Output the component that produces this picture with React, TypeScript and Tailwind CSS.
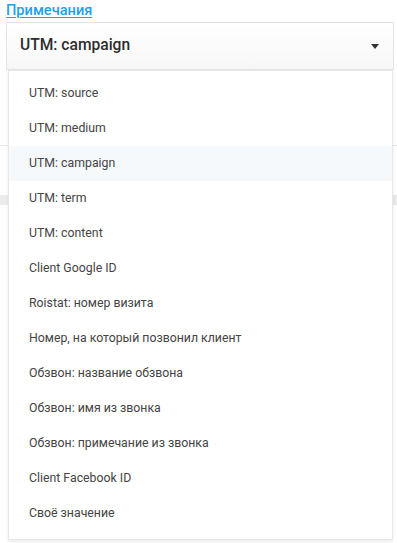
import React from "react";

const items = [
  "UTM: source",
  "UTM: medium",
  "UTM: campaign",
  "UTM: term",
  "UTM: content",
  "Client Google ID",
  "Roistat: номер визита",
  "Номер, на который позвонил клиент",
  "Обзвон: название обзвона",
  "Обзвон: имя из звонка",
  "Обзвон: примечание из звонка",
  "Client Facebook ID",
  "Своё значение",
];

export default function App() {
  return (
    <div
      className="relative w-[397px] h-[543px] bg-white overflow-hidden"
      style={{ fontFamily: "Roboto, Inter, 'Noto Sans', sans-serif" }}
    >
      {/* background page pieces */}
      <div className="absolute left-0 top-[145px] w-[397px] h-px bg-[#e6e6e6]" />
      <div className="absolute left-0 top-[195px] w-[397px] h-[10px] bg-[#e9ebef]" />

      <div className="relative px-[6px] pt-[1px]">
        <a className="block w-fit text-[14.6px] leading-[18px] font-medium text-[#1da1f2] underline underline-offset-2">
          Примечания
        </a>
        <div className="mt-[3px] h-[48px] w-[388px] border border-[#e3e3e3] bg-gradient-to-b from-white to-[#f7f7f7] flex items-center justify-between pl-[13px] pr-[14px]">
          <span className="text-[15.6px] font-medium text-[#2d2d2d]">UTM: campaign</span>
          <svg width="8" height="5" viewBox="0 0 8 5" className="mt-[1px]">
            <path d="M0 0 H8 L4 5 Z" fill="#333" />
          </svg>
        </div>
        <div className="ml-[2px] w-[385px] bg-white border border-[#e8e8e8] shadow-[0_2px_4px_rgba(0,0,0,0.08)] pt-[5px] pb-[8px]">
          {items.map((t) => (
            <div
              key={t}
              className={`h-[35px] flex items-center pl-[20px] text-[12.3px] text-[#444] ${
                t === "UTM: campaign" ? "bg-[#f5f9fc]" : ""
              }`}
            >
              {t}
            </div>
          ))}
        </div>
      </div>
    </div>
  );
}
